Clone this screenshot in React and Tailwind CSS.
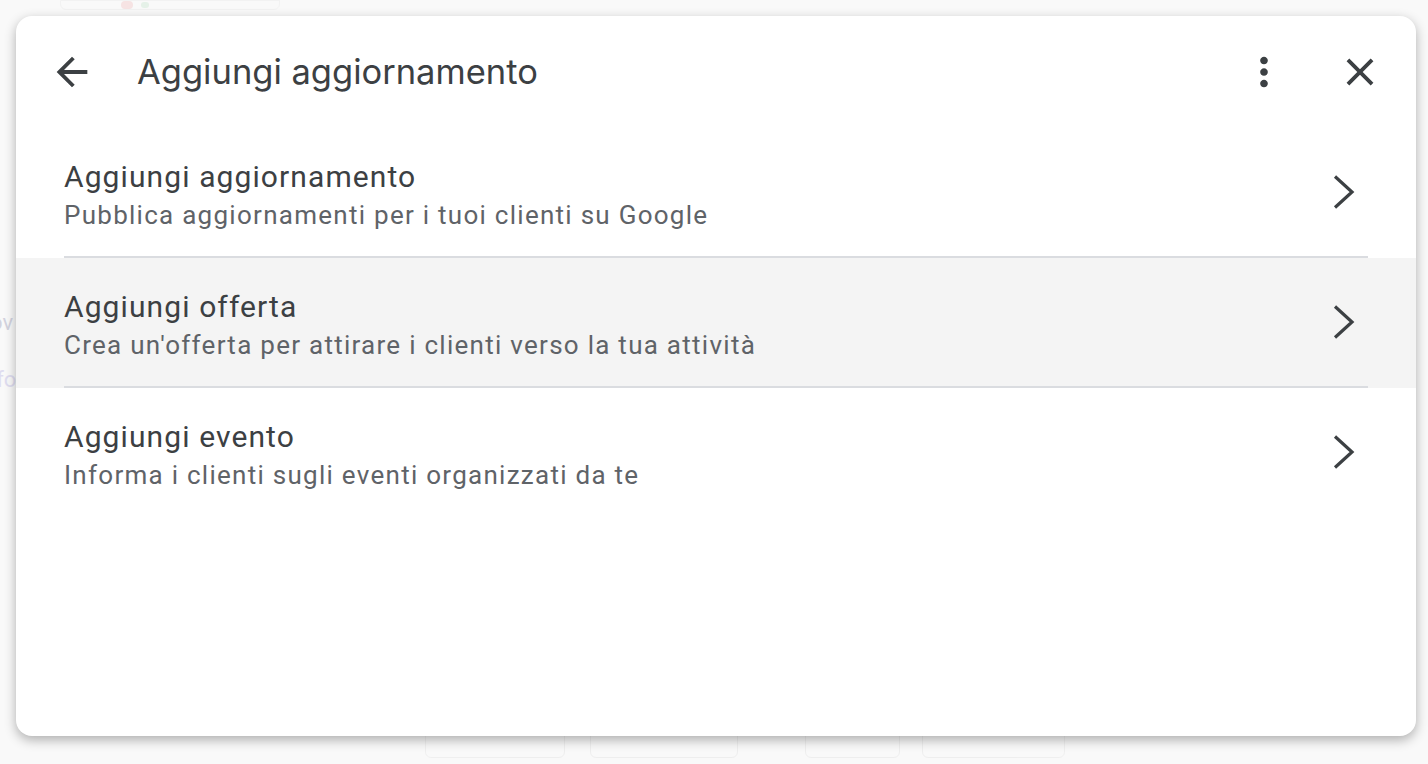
import React from "react";

const Icon = ({ d, className }) => (
  <svg viewBox="0 0 24 24" className={className} fill="currentColor" aria-hidden="true">
    <path d={d} />
  </svg>
);

const ARROW_BACK = "M20 11H7.83l5.59-5.59L12 4l-8 8 8 8 1.41-1.41L7.83 13H20v-2z";
const CLOSE = "M19 6.41L17.59 5 12 10.59 6.41 5 5 6.41 10.59 12 5 17.59 6.41 19 12 13.41 17.59 19 19 17.59 13.41 12z";
const MORE_VERT = "M12 8c1.1 0 2-.9 2-2s-.9-2-2-2-2 .9-2 2 .9 2 2 2zm0 2c-1.1 0-2 .9-2 2s.9 2 2 2 2-.9 2-2-.9-2-2-2zm0 6c-1.1 0-2 .9-2 2s.9 2 2 2 2-.9 2-2-.9-2-2-2z";

const Chevron = () => (
  <svg viewBox="0 0 40 40" className="w-[40px] h-[40px] text-[#3c4043]" aria-hidden="true">
    <polyline points="11,4.5 28,20 11,35.5" fill="none" stroke="currentColor" strokeWidth="3.2" />
  </svg>
);

const items = [
  { title: "Aggiungi aggiornamento", sub: "Pubblica aggiornamenti per i tuoi clienti su Google", hover: false },
  { title: "Aggiungi offerta", sub: "Crea un'offerta per attirare i clienti verso la tua attività", hover: true },
  { title: "Aggiungi evento", sub: "Informa i clienti sugli eventi organizzati da te", hover: false },
];

export default function App() {
  return (
    <div
      className="relative w-[1428px] h-[764px] overflow-hidden bg-[#f9f9f9]"
      style={{ fontFamily: "Roboto, 'Liberation Sans', sans-serif" }}
    >
      {/* faint page behind the dialog */}
      <div className="flex flex-col h-full opacity-40">
        <div className="flex items-start gap-4 px-[60px]">
          <div className="w-[220px] h-[10px] border border-[#e8e8e8] rounded-b-md flex items-center gap-2 pl-[60px]">
            <div className="w-[12px] h-[8px] rounded-full bg-[#f3c4c4]" />
            <div className="w-[8px] h-[6px] rounded-full bg-[#c9e6cf]" />
          </div>
        </div>
        <div className="flex flex-col gap-[24px] pt-[296px] text-[22px] text-[#9b9bb8]">
          <span className="-ml-[10px]">ov</span>
          <span className="-ml-[16px] text-[#b9b4e4]">nfo</span>
        </div>
        <div className="mt-auto flex pl-[425px] pb-[6px]">
          <div className="w-[140px] h-[40px] rounded-md border border-[#e0e0e0]" />
          <div className="w-[148px] h-[40px] rounded-md border border-[#e0e0e0] ml-[25px]" />
          <div className="w-[95px] h-[40px] rounded-md border border-[#e0e0e0] ml-[67px]" />
          <div className="w-[143px] h-[40px] rounded-md border border-[#e0e0e0] ml-[22px]" />
        </div>
      </div>

      {/* dialog */}
      <div className="absolute left-[16px] top-[16px] w-[1400px] h-[720px] bg-white rounded-[16px] shadow-[0_4px_12px_rgba(0,0,0,0.3)] overflow-hidden flex flex-col">
        <div className="h-[112px] flex items-center pl-[33px] pr-[33px] text-[#3c4043]">
          <Icon d={ARROW_BACK} className="w-[46px] h-[46px]" />
          <div
            className="ml-[42px] text-[34.5px] leading-none text-[#3c4043] flex-1"
            style={{ fontFamily: "Inter, Roboto, sans-serif" }}
          >
            Aggiungi aggiornamento
          </div>
          <Icon d={MORE_VERT} className="w-[46px] h-[46px]" />
          <Icon d={CLOSE} className="w-[46px] h-[46px] ml-[50px]" />
        </div>
        <div className="flex flex-col">
          {items.map((it, i) => (
            <div key={i} className={`flex flex-col ${it.hover ? "bg-[#f4f4f4]" : ""}`}>
              <div className="h-[128px] flex items-center pl-[48px] pr-[52px]">
                <div className="flex-1 flex flex-col pt-[6px]">
                  <div className="text-[30px] leading-[36px] text-[#3c4043] tracking-[1.1px]">{it.title}</div>
                  <div className="text-[26px] leading-[32px] text-[#5f6368] mt-[4px] tracking-[1.27px]">{it.sub}</div>
                </div>
                <Chevron />
              </div>
              {i < items.length - 1 && <div className="mx-[48px] h-[2px] bg-[#dadce0]" />}
            </div>
          ))}
        </div>
      </div>
    </div>
  );
}
